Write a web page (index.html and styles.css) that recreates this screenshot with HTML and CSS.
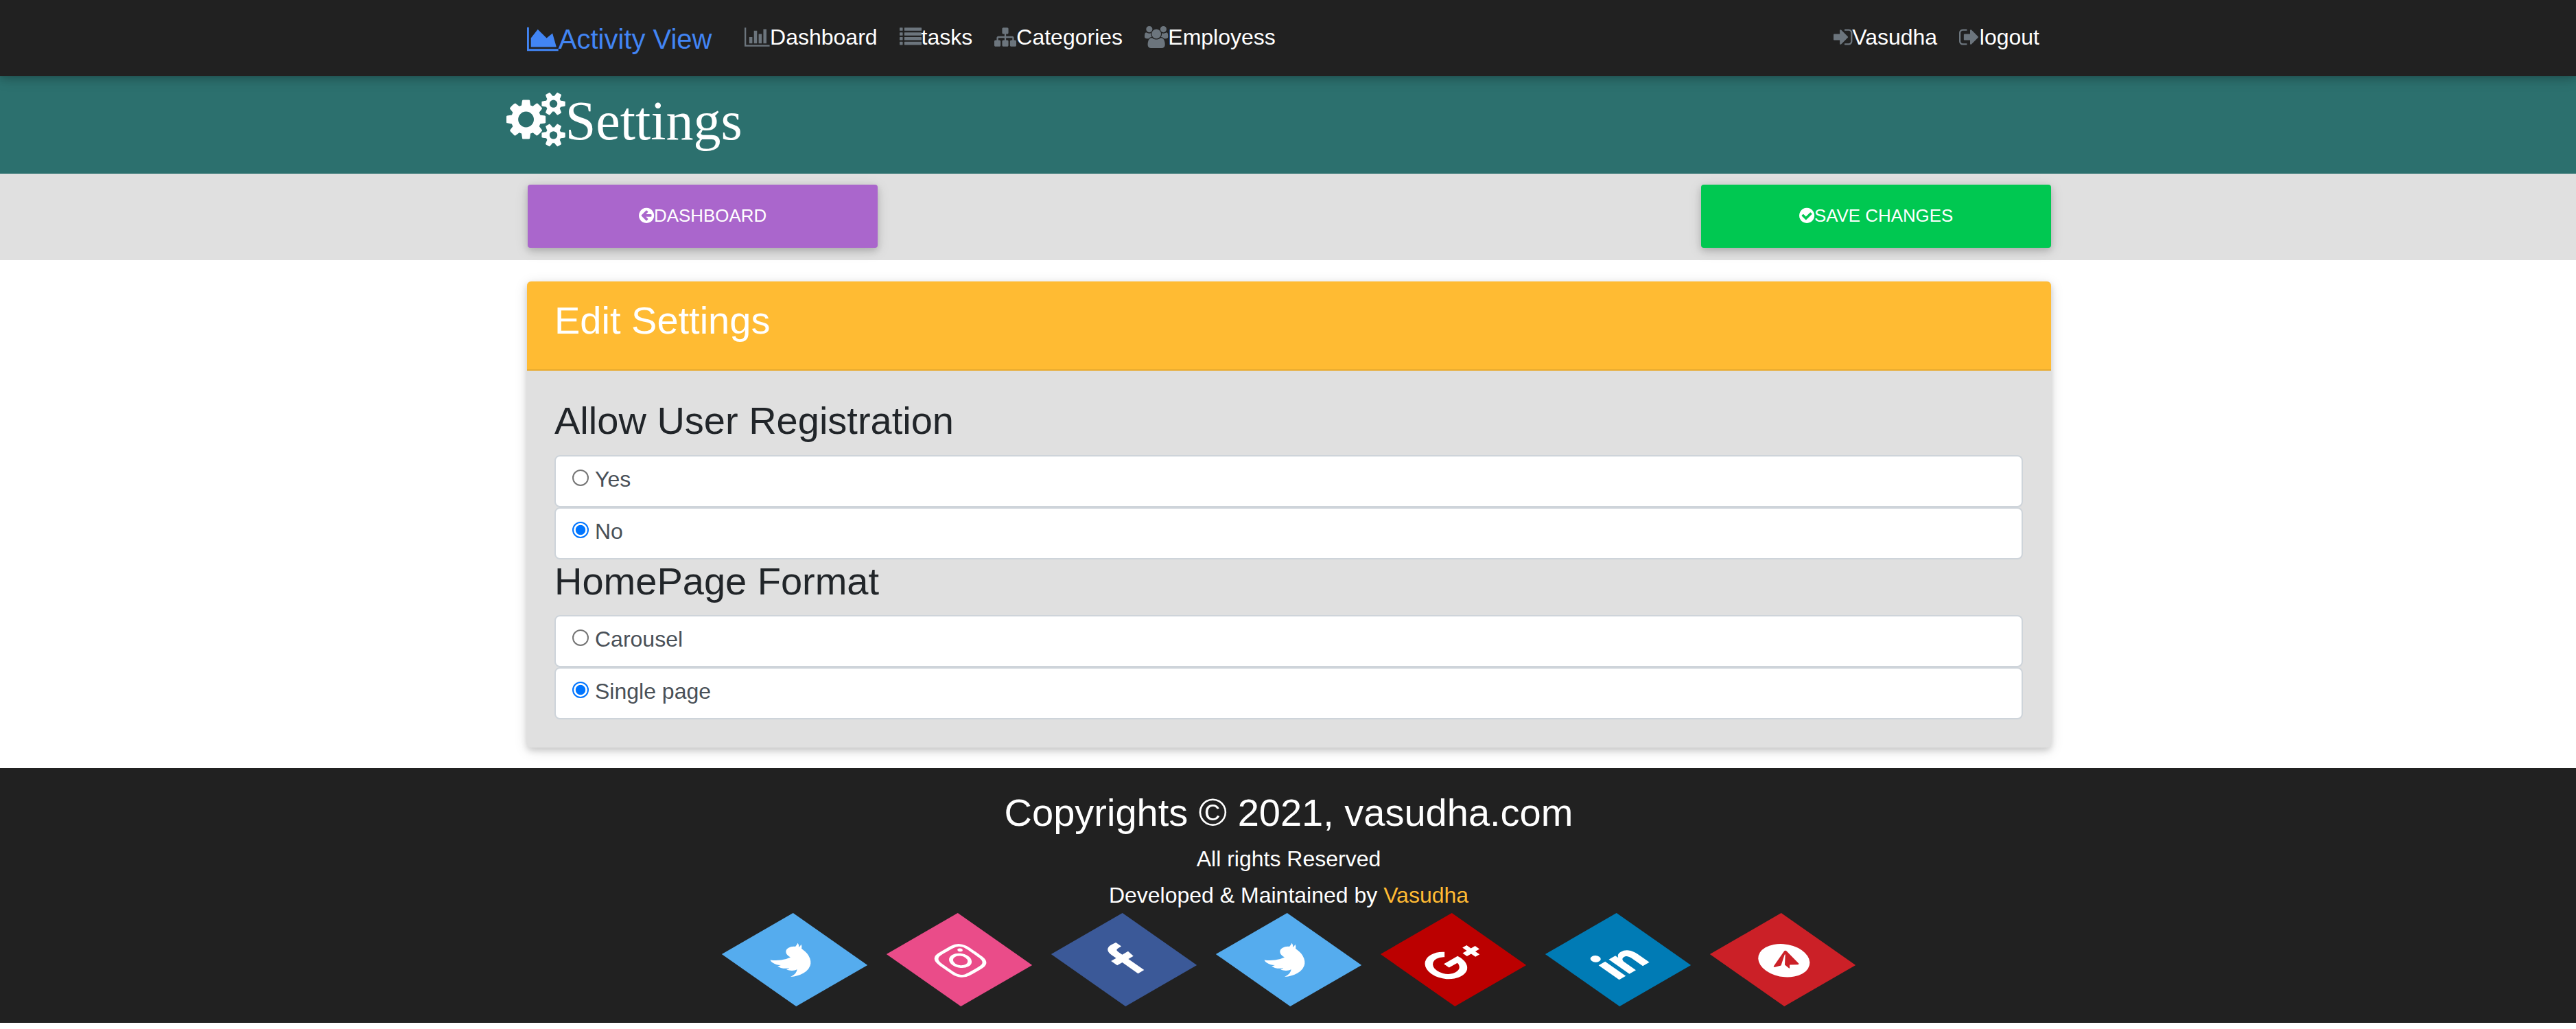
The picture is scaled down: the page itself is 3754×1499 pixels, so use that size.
FILE: index.html
```html
<!DOCTYPE html>
<html lang="en">
<head>
<meta charset="utf-8">
<title>Settings</title>
<link rel="stylesheet" href="styles.css">
</head>
<body>
<nav class="navbar">
  <div class="container navbar-inner">
    <a class="brand"><svg class="icon" viewBox="0 0 2048 1792"><path d="M2048 1536v128h-2048v-1536h128v1408h1920zm-384-1024l256 896h-1664v-576l448-576 576 576z"/></svg>Activity View</a>
    <ul class="nav">
      <li><svg class="icon" viewBox="0 0 2048 1792"><path d="M640 896v512h-256v-512h256zm384-512v1024h-256v-1024h256zm1024 1152v128h-2048v-1536h128v1408h1920zm-640-896v768h-256v-768h256zm384-384v1152h-256v-1152h256z"/></svg><a>Dashboard</a></li>
      <li><svg class="icon" viewBox="0 0 1792 1792"><g><rect y="128" width="256" height="256" rx="32"/><rect x="384" y="128" width="1408" height="256" rx="32"/><rect y="512" width="256" height="256" rx="32"/><rect x="384" y="512" width="1408" height="256" rx="32"/><rect y="896" width="256" height="256" rx="32"/><rect x="384" y="896" width="1408" height="256" rx="32"/><rect y="1280" width="256" height="256" rx="32"/><rect x="384" y="1280" width="1408" height="256" rx="32"/></g></svg><a>tasks</a></li>
      <li><svg class="icon" viewBox="0 0 1792 1792"><path d="M1792 1248v320q0 40-28 68t-68 28h-320q-40 0-68-28t-28-68v-320q0-40 28-68t68-28h96v-192h-512v192h96q40 0 68 28t28 68v320q0 40-28 68t-68 28h-320q-40 0-68-28t-28-68v-320q0-40 28-68t68-28h96v-192h-512v192h96q40 0 68 28t28 68v320q0 40-28 68t-68 28h-320q-40 0-68-28t-28-68v-320q0-40 28-68t68-28h96v-192q0-52 38-90t90-38h512v-192h-96q-40 0-68-28t-28-68v-320q0-40 28-68t68-28h320q40 0 68 28t28 68v320q0 40-28 68t-68 28h-96v192h512q52 0 90 38t38 90v192h96q40 0 68 28t28 68z"/></svg><a>Categories</a></li>
      <li><svg class="icon" viewBox="0 0 1920 1792"><path d="M593 896q-162 5-265 128h-134q-82 0-138-40.5t-56-118.5q0-353 124-353 6 0 43.5 21t97.5 42.5 119 21.5q67 0 133-23-5 37-5 66 0 139 81 256zm1071 637q0 120-73 189.5t-194 69.5h-874q-121 0-194-69.5t-73-189.5q0-53 3.5-103.5t14-109 26.5-108.5 43-97.5 62-81 85.5-53.5 111.5-20q10 0 43 21.5t73 48 107 48 135 21.5 135-21.5 107-48 73-48 43-21.5q61 0 111.5 20t85.5 53.5 62 81 43 97.5 26.5 108.5 14 109 3.5 103.5zm-1024-1277q0 106-75 181t-181 75-181-75-75-181 75-181 181-75 181 75 75 181zm704 384q0 159-112.5 271.5t-271.5 112.5-271.5-112.5-112.5-271.5 112.5-271.5 271.5-112.5 271.5 112.5 112.5 271.5zm576 225q0 78-56 118.5t-138 40.5h-134q-103-123-265-128 81-117 81-256 0-29-5-66 66 23 133 23 59 0 119-21.5t97.5-42.5 43.5-21q124 0 124 353zm-128-609q0 106-75 181t-181 75-181-75-75-181 75-181 181-75 181 75 75 181z"/></svg><a>Employess</a></li>
    </ul>
    <ul class="nav nav-right">
      <li><svg class="icon" viewBox="128 0 1536 1792"><path d="M1312 896q0 26-19 45l-544 544q-19 19-45 19t-45-19-19-45v-288h-448q-26 0-45-19t-19-45v-384q0-26 19-45t45-19h448v-288q0-26 19-45t45-19 45 19l544 544q19 19 19 45zm352-352v704q0 119-84.5 203.5t-203.5 84.5h-320q-13 0-22.5-9.5t-9.5-22.5q0-4-1-20t-.5-26.5 3-23.5 10-19.5 20.5-6.5h320q66 0 113-47t47-113v-704q0-66-47-113t-113-47h-312l-11.5-1-11.5-3-8-5.5-7-9-2-13.5q0-4-1-20t-.5-26.5 3-23.5 10-19.5 20.5-6.5h320q119 0 203.5 84.5t84.5 203.5z"/></svg><a>Vasudha</a></li>
      <li><svg class="icon" viewBox="64 0 1664 1792"><path d="M704 1440q0 4 1 20t.5 26.5-3 23.5-10 19.5-20.5 6.5h-320q-119 0-203.5-84.5t-84.5-203.5v-704q0-119 84.5-203.5t203.5-84.5h320q13 0 22.5 9.5t9.5 22.5q0 4 1 20t.5 26.5-3 23.5-10 19.5-20.5 6.5h-320q-66 0-113 47t-47 113v704q0 66 47 113t113 47h312l11.5 1 11.5 3 8 5.5 7 9 2 13.5zm928-544q0 26-19 45l-544 544q-19 19-45 19t-45-19-19-45v-288h-448q-26 0-45-19t-19-45v-384q0-26 19-45t45-19h448v-288q0-26 19-45t45-19 45 19l544 544q19 19 19 45z"/></svg><a>logout</a></li>
    </ul>
  </div>
</nav>

<header class="page-header">
  <div class="container">
    <h1><svg class="icon" viewBox="0 0 1920 1792"><path d="M896 896q0-106-75-181t-181-75-181 75-75 181 75 181 181 75 181-75 75-181zm768 512q0-52-38-90t-90-38-90 38-38 90q0 53 37.5 90.5t90.5 37.5 90.5-37.5 37.5-90.5zm0-1024q0-52-38-90t-90-38-90 38-38 90q0 53 37.5 90.5t90.5 37.5 90.5-37.5 37.5-90.5zm-384 421v185q0 10-7 19.5t-16 10.5l-155 24q-11 35-32 76 34 48 90 115 7 11 7 20 0 12-7 19-23 30-82.5 89.5t-78.5 59.5q-11 0-21-7l-115-90q-37 19-77 31-11 108-23 155-7 24-30 24h-186q-11 0-20-7.5t-10-17.5l-23-153q-34-10-75-31l-118 89q-7 7-20 7-11 0-21-8-144-133-144-160 0-9 7-19 10-14 41-53t47-61q-23-44-35-82l-152-24q-10-1-17-9.5t-7-19.5v-185q0-10 7-19.5t16-10.5l155-24q11-35 32-76-34-48-90-115-7-11-7-20 0-12 7-20 22-30 82-89t79-59q11 0 21 7l115 90q34-18 77-32 11-108 23-154 7-24 30-24h186q11 0 20 7.5t10 17.5l23 153q34 10 75 31l118-89q8-7 20-7 11 0 21 8 144 133 144 160 0 8-7 19-12 16-42 54t-45 60q23 48 34 82l152 23q10 2 17 10.5t7 19.5zm640 533v140q0 16-149 31-12 27-30 52 51 113 51 138 0 4-4 7-122 71-124 71-8 0-46-47t-52-68q-20 2-30 2t-30-2q-14 21-52 68t-46 47q-2 0-124-71-4-3-4-7 0-25 51-138-18-25-30-52-149-15-149-31v-140q0-16 149-31 13-29 30-52-51-113-51-138 0-4 4-7 4-2 35-20t59-34 30-16q8 0 46 46.5t52 67.5q20-2 30-2t30 2q51-71 92-112l6-2q4 0 124 70 4 3 4 7 0 25-51 138 17 23 30 52 149 15 149 31zm0-1024v140q0 16-149 31-12 27-30 52 51 113 51 138 0 4-4 7-122 71-124 71-8 0-46-47t-52-68q-20 2-30 2t-30-2q-14 21-52 68t-46 47q-2 0-124-71-4-3-4-7 0-25 51-138-18-25-30-52-149-15-149-31v-140q0-16 149-31 13-29 30-52-51-113-51-138 0-4 4-7 4-2 35-20t59-34 30-16q8 0 46 46.5t52 67.5q20-2 30-2t30 2q51-71 92-112l6-2q4 0 124 70 4 3 4 7 0 25-51 138 17 23 30 52 149 15 149 31z"/></svg>Settings</h1>
  </div>
</header>

<section class="actions">
  <div class="container actions-inner">
    <a class="btn btn-secondary"><svg class="icon" viewBox="128 0 1536 1792"><path d="M1408 960v-128q0-26-19-45t-45-19h-502l189-189q19-19 19-45t-19-45l-91-91q-18-18-45-18t-45 18l-362 362-91 91q-18 18-18 45t18 45l91 91 362 362q18 18 45 18t45-18l91-91q18-18 18-45t-18-45l-189-189h502q26 0 45-19t19-45zm256-64q0 209-103 385.5t-279.5 279.5-385.5 103-385.5-103-279.5-279.5-103-385.5 103-385.5 279.5-279.5 385.5-103 385.5 103 279.5 279.5 103 385.5z"/></svg>DASHBOARD</a>
    <a class="btn btn-success"><svg class="icon" viewBox="128 0 1536 1792"><path d="M1412 734q0-28-18-46l-91-90q-19-19-45-19t-45 19l-408 407-226-226q-19-19-45-19t-45 19l-91 90q-18 18-18 46 0 27 18 45l362 362q19 19 45 19 27 0 46-19l543-543q18-18 18-45zm252 162q0 209-103 385.5t-279.5 279.5-385.5 103-385.5-103-279.5-279.5-103-385.5 103-385.5 279.5-279.5 385.5-103 385.5 103 279.5 279.5 103 385.5z"/></svg>SAVE CHANGES</a>
  </div>
</section>

<main class="container">
  <div class="card">
    <div class="card-header"><h3>Edit Settings</h3></div>
    <form class="card-body">
      <h3>Allow User Registration</h3>
      <label class="option"><input type="radio" name="registration">Yes</label>
      <label class="option"><input type="radio" name="registration" checked>No</label>
      <h3 class="second">HomePage Format</h3>
      <label class="option"><input type="radio" name="format">Carousel</label>
      <label class="option"><input type="radio" name="format" checked>Single page</label>
    </form>
  </div>
</main>

<footer class="footer">
  <h3>Copyrights © 2021, vasudha.com</h3>
  <p class="rights">All rights Reserved</p>
  <p class="credit">Developed &amp; Maintained by <a>Vasudha</a></p>
  <ul class="social">
    <li class="twitter"><svg class="icon" viewBox="64 0 1664 1792"><path d="M1684 408q-67 98-162 167 1 14 1 42 0 130-38 259.5t-115.5 248.5-184.5 210.5-258 146-323 54.5q-271 0-496-145 35 4 78 4 225 0 401-138-105-2-188-64.5t-114-159.5q33 5 61 5 43 0 85-11-112-23-185.5-111.5t-73.5-205.5v-4q68 38 146 41-66-44-105-115t-39-154q0-88 44-163 121 149 294.5 238.5t371.5 99.5q-8-38-8-74 0-134 94.5-228.5t228.5-94.5q140 0 236 102 109-21 205-78-37 115-142 178 93-10 186-50z"/></svg></li>
    <li class="instagram"><svg class="icon" viewBox="128 0 1536 1792"><path d="M1152 896q0-106-75-181t-181-75-181 75-75 181 75 181 181 75 181-75 75-181zm138 0q0 164-115 279t-279 115-279-115-115-279 115-279 279-115 279 115 115 279zm108-410q0 38-27 65t-65 27-65-27-27-65 27-65 65-27 65 27 27 65zm-502-220q-7 0-76.5-.5t-105.5 0-96.5 3-103 10-71.5 18.5q-50 20-88 58t-58 88q-11 29-18.5 71.5t-10 103-3 96.5 0 105.5.5 76.5-.5 76.5 0 105.5 3 96.5 10 103 18.5 71.5q20 50 58 88t88 58q29 11 71.5 18.5t103 10 96.5 3 105.5 0 76.5-.5 76.5.5 105.5 0 96.5-3 103-10 71.5-18.5q50-20 88-58t58-88q11-29 18.5-71.5t10-103 3-96.5 0-105.5-.5-76.5.5-76.5 0-105.5-3-96.5-10-103-18.5-71.5q-20-50-58-88t-88-58q-29-11-71.5-18.5t-103-10-96.5-3-105.5 0-76.5.5zm768 630q0 229-5 317-10 208-124 322t-322 124q-88 5-317 5t-317-5q-208-10-322-124t-124-322q-5-88-5-317t5-317q10-208 124-322t322-124q88-5 317-5t317 5q208 10 322 124t124 322q5 88 5 317z"/></svg></li>
    <li class="facebook"><svg class="icon" viewBox="384 0 1024 1792"><path d="M1343 12v264h-157q-86 0-116 36t-30 108v189h293l-39 296h-254v759h-306v-759h-255v-296h255v-218q0-186 104-288.5t277-102.5q147 0 228 12z"/></svg></li>
    <li class="twitter"><svg class="icon" viewBox="64 0 1664 1792"><path d="M1684 408q-67 98-162 167 1 14 1 42 0 130-38 259.5t-115.5 248.5-184.5 210.5-258 146-323 54.5q-271 0-496-145 35 4 78 4 225 0 401-138-105-2-188-64.5t-114-159.5q33 5 61 5 43 0 85-11-112-23-185.5-111.5t-73.5-205.5v-4q68 38 146 41-66-44-105-115t-39-154q0-88 44-163 121 149 294.5 238.5t371.5 99.5q-8-38-8-74 0-134 94.5-228.5t228.5-94.5q140 0 236 102 109-21 205-78-37 115-142 178 93-10 186-50z"/></svg></li>
    <li class="google"><svg class="icon" viewBox="0 0 2304 1792"><path d="M1437 913q0 208-87 370.5t-248 254-369 91.5q-149 0-285-58t-234-156-156-234-58-285 58-285 156-234 234-156 285-58q286 0 491 192l-199 191q-117-113-292-113-123 0-227.5 62t-165.5 168.5-61 232.5 61 232.5 165.5 168.5 227.5 62q83 0 152.5-23t114.5-57.5 78.5-78.5 49-83 21.5-74h-416v-252h692q12 63 12 122zm867-122v210h-209v209h-210v-209h-209v-210h209v-209h210v209h209z"/></svg></li>
    <li class="linkedin"><svg class="icon" viewBox="128 0 1536 1792"><path d="M477 625v991h-330v-991h330zm21-306q1 73-50.5 122t-135.5 49h-2q-82 0-132-49t-50-122q0-74 51.5-122.5t134.5-48.5 133 48.5 51 122.5zm1166 729v568h-329v-530q0-105-40.5-164.5t-126.5-59.5q-63 0-105.5 34.5t-63.5 85.5q-11 30-11 81v553h-329q2-399 2-647t-1-296l-1-48h329v144h-2q20-32 41-56t56.5-52 87-43.5 114.5-15.5q171 0 275 113.5t104 332.5z"/></svg></li>
    <li class="telegram"><svg class="icon" viewBox="0 0 1792 1792"><path d="M1189 1307l147-693q9-44-10.5-63t-51.5-7l-864 333q-29 11-39.5 25t-2.5 26.5 32 19.5l221 69 513-323q21-14 32-6 7 5-4 15l-415 375-16 228q23 0 45-22l108-104 224 165q64 36 81-38zm603-411q0 182-71 348t-191 286-286 191-348 71-348-71-286-191-191-286-71-348 71-348 191-286 286-191 348-71 348 71 286 191 191 286 71 348z"/></svg></li>
  </ul>
</footer>
</body>
</html>
```
FILE: styles.css
```css
* {
  box-sizing: border-box;
}

body {
  margin: 0;
  background: #fff;
  color: #212529;
  font-family: "Liberation Sans", Arial, sans-serif;
  font-size: 32px;
}

h1, h3, p, ul {
  margin: 0;
  padding: 0;
  font-weight: 400;
}

ul {
  list-style: none;
}

h3 {
  font-size: 56px;
  line-height: 67px;
}

.container {
  width: 2278px;
  margin: 0 auto;
  padding: 0 30px;
}

.icon {
  height: 1em;
  vertical-align: -0.143em;
  fill: currentColor;
  overflow: visible;
}

/* Top navigation */
.navbar {
  position: relative;
  z-index: 1;
  height: 111px;
  background: #212121;
  box-shadow: 0 4px 10px rgba(0, 0, 0, .16), 0 4px 20px rgba(0, 0, 0, .12);
}

.navbar-inner {
  display: flex;
  align-items: flex-start;
  padding-top: 27px;
}

.brand {
  margin-right: 48px;
  color: #4285f4;
  font-size: 40px;
  line-height: 60px;
}

.nav {
  display: flex;
  gap: 32px;
  margin-top: 3px;
  color: #6c757d;
  line-height: 48px;
}

.nav a {
  color: #fff;
}

.nav-right {
  margin-left: auto;
  padding-right: 14px;
}

/* Page title */
.page-header {
  height: 142px;
  padding-top: 1px;
  background: #2c706e;
  color: #fff;
}

.page-header .container {
  padding: 0;
}

.page-header h1 {
  font-family: "Liberation Serif", "Times New Roman", serif;
  font-size: 80px;
  line-height: 128px;
}

/* Action buttons */
.actions {
  height: 126px;
  padding-top: 16px;
  background: #e0e0e0;
}

.actions-inner {
  display: flex;
  justify-content: space-between;
  padding: 0 27px 0 31px;
}

.btn {
  width: 510px;
  height: 92px;
  border-radius: 4px;
  box-shadow: 0 4px 10px rgba(0, 0, 0, .16), 0 4px 20px rgba(0, 0, 0, .12);
  color: #fff;
  font-size: 25.9px;
  line-height: 90px;
  text-align: center;
}

.btn-secondary {
  background: #a6c;
}

.btn-success {
  background: #00c851;
}

/* Settings card */
.card {
  width: 2221px;
  margin: 31px 0 30px;
  border-radius: 6px;
  background: #e0e0e0;
  box-shadow: 0 4px 10px rgba(0, 0, 0, .16), 0 4px 20px rgba(0, 0, 0, .12);
}

.card-header {
  height: 130px;
  padding: 23px 40px 0;
  border-bottom: 2px solid #e8aa2e;
  border-radius: 6px 6px 0 0;
  background: #fb3;
  color: #fff;
}

.card-body {
  padding: 39px 41px 41px 40px;
}

.card-body h3 {
  margin-bottom: 17px;
}

.card-body .second {
  margin-top: -2px;
  margin-bottom: 16px;
}

.option {
  display: flex;
  height: 76px;
  padding: 11px 24px;
  border: 2px solid #ced4da;
  border-radius: 8px;
  background: #fff;
  color: #495057;
  line-height: 44px;
}

.option input {
  appearance: none;
  width: 24px;
  height: 24px;
  margin: 8px 9px 0 0;
  border: 2px solid #767676;
  border-radius: 50%;
}

.option input:checked {
  border-color: #0075ff;
  background: radial-gradient(circle, #0075ff 6.8px, #fff 7.6px);
}

/* Footer */
.footer {
  height: 371px;
  padding: 31px 0 0 2px;
  background: #212121;
  color: #fff;
  line-height: 48px;
  text-align: center;
}

.rights {
  margin-top: 10px;
}

.credit {
  margin-top: 5px;
}

.credit a {
  color: #fb3;
}

.social {
  display: flex;
  justify-content: center;
  gap: 120px;
  margin-top: 10px;
}

.social li {
  display: flex;
  align-items: center;
  justify-content: center;
  width: 120px;
  height: 120px;
  padding-top: 4px;
  font-size: 60px;
  transform: rotate(-30deg) skew(25deg);
}

.social .icon {
  flex: none;
}

.twitter {
  background: #55acee;
}

.instagram {
  background: #ea4c89;
}

.facebook {
  background: #3b5998;
}

.google {
  background: #b00;
}

.linkedin {
  background: #007bb5;
}

.telegram {
  background: #cb2027;
}
```
